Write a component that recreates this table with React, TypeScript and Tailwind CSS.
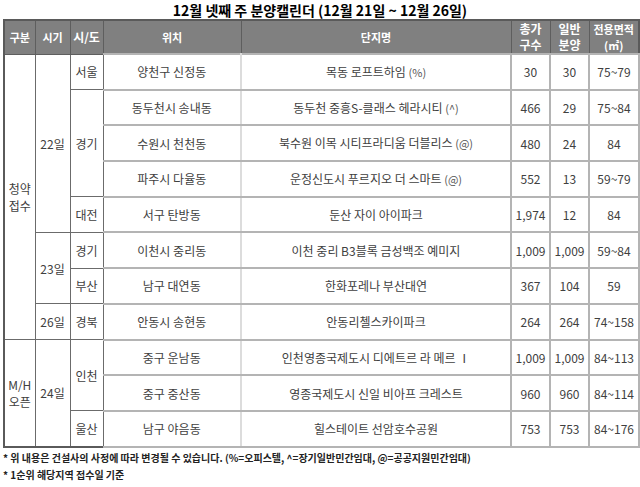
import React from "react";

type Row = {
  cells: { text: React.ReactNode; rowSpan?: number; cls?: string }[];
};

const F = "'Noto Sans CJK KR', 'Noto Sans', sans-serif";

const left = "border border-[#6b6b6b]";
const mid = "border-y-2 border-y-[#b4b4b4] border-l border-l-[#8a8a8a] border-r-2 border-r-[#dcdcdc]";
const name = "border-y-2 border-y-[#b4b4b4] border-r-2 border-r-[#b4b4b4]";
const num = "border-y-2 border-y-[#b4b4b4] border-r-2 border-r-[#b4b4b4]";

function P({ children }: { children: React.ReactNode }) {
  return <span className="text-[11px] text-[#555]">{children}</span>;
}

const rows: Row[] = [
  {
    cells: [
      { text: <>청약<br />접수</>, rowSpan: 8, cls: left },
      { text: "22일", rowSpan: 5, cls: left },
      { text: "서울", cls: left },
      { text: "양천구 신정동", cls: mid },
      { text: <>목동 로프트하임 <P>(%)</P></>, cls: name },
      { text: "30", cls: num },
      { text: "30", cls: num },
      { text: "75~79", cls: num },
    ],
  },
  {
    cells: [
      { text: "경기", rowSpan: 3, cls: left },
      { text: "동두천시 송내동", cls: mid },
      { text: <>동두천 중흥S-클래스 헤라시티 <P>(^)</P></>, cls: name },
      { text: "466", cls: num },
      { text: "29", cls: num },
      { text: "75~84", cls: num },
    ],
  },
  {
    cells: [
      { text: "수원시 천천동", cls: mid },
      { text: <>북수원 이목 시티프라디움 더블리스 <P>(@)</P></>, cls: name },
      { text: "480", cls: num },
      { text: "24", cls: num },
      { text: "84", cls: num },
    ],
  },
  {
    cells: [
      { text: "파주시 다율동", cls: mid },
      { text: <>운정신도시 푸르지오 더 스마트 <P>(@)</P></>, cls: name },
      { text: "552", cls: num },
      { text: "13", cls: num },
      { text: "59~79", cls: num },
    ],
  },
  {
    cells: [
      { text: "대전", cls: left },
      { text: "서구 탄방동", cls: mid },
      { text: "둔산 자이 아이파크", cls: name },
      { text: "1,974", cls: num },
      { text: "12", cls: num },
      { text: "84", cls: num },
    ],
  },
  {
    cells: [
      { text: "23일", rowSpan: 2, cls: left },
      { text: "경기", cls: left },
      { text: "이천시 중리동", cls: mid },
      { text: "이천 중리 B3블록 금성백조 예미지", cls: name },
      { text: "1,009", cls: num },
      { text: "1,009", cls: num },
      { text: "59~84", cls: num },
    ],
  },
  {
    cells: [
      { text: "부산", cls: left },
      { text: "남구 대연동", cls: mid },
      { text: "한화포레나 부산대연", cls: name },
      { text: "367", cls: num },
      { text: "104", cls: num },
      { text: "59", cls: num },
    ],
  },
  {
    cells: [
      { text: "26일", cls: left },
      { text: "경북", cls: left },
      { text: "안동시 송현동", cls: mid },
      { text: "안동리첼스카이파크", cls: name },
      { text: "264", cls: num },
      { text: "264", cls: num },
      { text: "74~158", cls: num },
    ],
  },
  {
    cells: [
      { text: <>M/H<br />오픈</>, rowSpan: 3, cls: left },
      { text: "24일", rowSpan: 3, cls: left },
      { text: "인천", rowSpan: 2, cls: left },
      { text: "중구 운남동", cls: mid },
      { text: "인천영종국제도시 디에트르 라 메르 Ⅰ", cls: name },
      { text: "1,009", cls: num },
      { text: "1,009", cls: num },
      { text: "84~113", cls: num },
    ],
  },
  {
    cells: [
      { text: "중구 중산동", cls: mid },
      { text: "영종국제도시 신일 비아프 크레스트", cls: name },
      { text: "960", cls: num },
      { text: "960", cls: num },
      { text: "84~114", cls: num },
    ],
  },
  {
    cells: [
      { text: "울산", cls: left },
      { text: "남구 야음동", cls: mid },
      { text: "힐스테이트 선암호수공원", cls: name },
      { text: "753", cls: num },
      { text: "753", cls: num },
      { text: "84~176", cls: num },
    ],
  },
];

const widths = [31, 35, 33, 138, 270, 39, 39, 50];

export default function App() {
  const th = "border border-[#5e5e5e] text-white font-bold text-[11px] leading-[16px] text-center align-middle p-0";
  return (
    <div
      className="w-[640px] h-[487px] bg-white overflow-hidden text-[#404040]"
      style={{ fontFamily: F }}
    >
      <div className="h-[19px] flex items-center justify-center text-[14px] font-bold text-black leading-none">
        12월 넷째 주 분양캘린더 (12월 21일 ~ 12월 26일)
      </div>
      <table className="ml-[3px] w-[635px] table-fixed border-collapse border-2 border-[#5a5a5a] text-[12px]">
        <colgroup>
          {widths.map((w, i) => (
            <col key={i} style={{ width: w }} />
          ))}
        </colgroup>
        <thead>
          <tr className="h-[34px] bg-[#808080]">
            <th className={th}>구분</th>
            <th className={th}>시기</th>
            <th className={th + " text-[12px]"}>시/도</th>
            <th className={th}>위치</th>
            <th className={th}>단지명</th>
            <th className={th + " text-[12px]"}>총가<br />구수</th>
            <th className={th + " text-[12px]"}>일반<br />분양</th>
            <th className={th}>전용면적<br />(㎡)</th>
          </tr>
        </thead>
        <tbody>
          {rows.map((r, i) => (
            <tr key={i} className="h-[35.7px]">
              {r.cells.map((c, j) => (
                <td
                  key={j}
                  rowSpan={c.rowSpan}
                  className={
                    "text-center align-middle whitespace-nowrap leading-[17px] p-0 " + (c.cls || "")
                  }
                >
                  {c.text}
                </td>
              ))}
            </tr>
          ))}
        </tbody>
      </table>
      <div className="pl-[3px] pt-[1px] text-[10px] font-bold text-[#222] leading-[17px]">
        <div>* 위 내용은 건설사의 사정에 따라 변경될 수 있습니다. (%=오피스텔, ^=장기일반민간임대, @=공공지원민간임대)</div>
        <div>* 1순위 해당지역 접수일 기준</div>
      </div>
    </div>
  );
}
